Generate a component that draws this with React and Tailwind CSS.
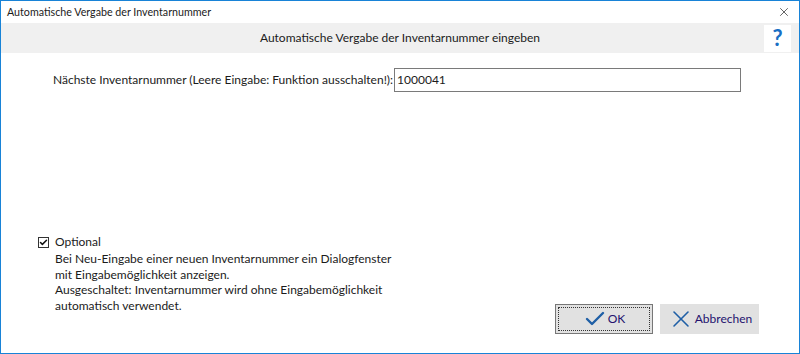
import { Check, X } from 'lucide-react'

export default function App() {
  return (
    <div
      className="w-[800px] h-[354px] flex flex-col border border-[#1883d7] bg-white text-[#1b1b1b] text-[12px] overflow-hidden whitespace-nowrap"
      style={{ fontFamily: 'Lato, "Noto Sans", sans-serif' }}
    >
      {/* title bar */}
      <div className="h-[22px] flex items-center justify-between pl-[6px] pr-[8px]">
        <span className="leading-none text-[10.7px]">Automatische Vergabe der Inventarnummer</span>
        <X className="w-[14px] h-[14px] text-[#222]" strokeWidth={1.2} />
      </div>

      {/* header band */}
      <div className="h-[30px] bg-[#f0f0f0] flex items-center">
        <div className="flex-1 text-center leading-none pl-[35px]">Automatische Vergabe der Inventarnummer eingeben</div>
        <div className="w-[27px] h-[27px] bg-white mr-[8px] flex items-center justify-center text-[#1a6fc4] font-bold text-[22px] leading-none">
          ?
        </div>
      </div>

      {/* body */}
      <div className="flex-1 flex flex-col px-[37px] pb-[18px]">
        <div className="flex items-center mt-[15px] pl-[15px]">
          <span className="mr-[1px]">Nächste Inventarnummer (Leere Eingabe: Funktion ausschalten!):</span>
          <div className="w-[347px] h-[24px] border border-[#7a7a7a] flex items-center pl-[2px]">1000041</div>
        </div>

        <div className="flex-1" />

        <div className="flex items-end justify-between">
          <div className="flex flex-col mb-[22px]">
            <label className="flex items-center gap-[6px]">
              <span className="w-[11px] h-[11px] border border-[#333] flex items-center justify-center">
                <Check className="w-[9px] h-[9px] text-[#111]" strokeWidth={4} />
              </span>
              <span>Optional</span>
            </label>
            <div className="pl-[17px] leading-[15.5px]">
              <div>Bei Neu-Eingabe einer neuen Inventarnummer ein Dialogfenster</div>
              <div>mit Eingabemöglichkeit anzeigen.</div>
              <div>Ausgeschaltet: Inventarnummer wird ohne Eingabemöglichkeit</div>
              <div>automatisch verwendet.</div>
            </div>
          </div>

          <div className="flex gap-[7px] mr-[3px] mb-[1px]">
            <button className="w-[98px] h-[30px] bg-[#e1e1e1] border border-[#777] flex items-center justify-center p-[2px]">
              <span className="w-full h-full border border-dotted border-[#333] flex items-center justify-center gap-[1px]">
                <Check className="w-[24px] h-[24px] text-[#1f5fa6]" strokeWidth={2.4} />
                <span className="text-[#24126e]">OK</span>
              </span>
            </button>
            <button className="w-[99px] h-[30px] bg-[#e1e1e1] flex items-center justify-center gap-0">
              <X className="w-[28px] h-[28px] text-[#1f5fa6]" strokeWidth={1.3} />
              <span className="text-[#24126e]">Abbrechen</span>
            </button>
          </div>
        </div>
      </div>
    </div>
  )
}
